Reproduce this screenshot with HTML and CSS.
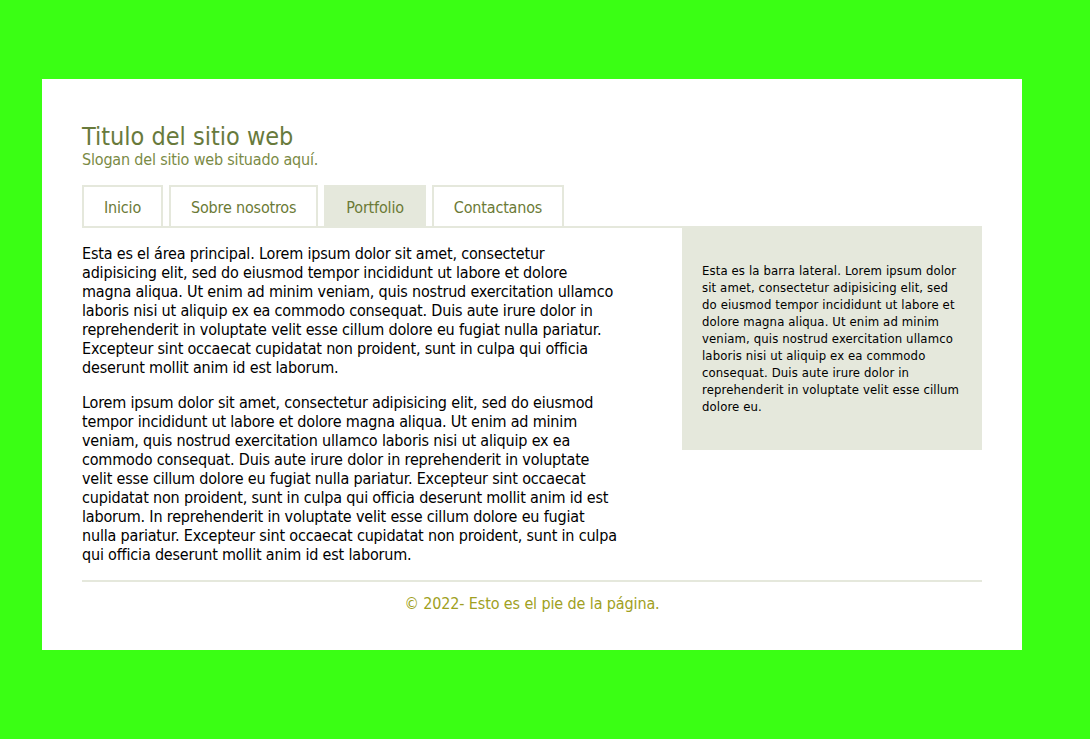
FILE: index.html
```html
<!DOCTYPE html>
<html lang="es">
<head>
<meta charset="utf-8">
<title>Titulo del sitio web</title>
<link rel="stylesheet" href="styles.css">
</head>
<body>
<div class="page">
  <header class="header">
    <h1 class="site-title">Titulo del sitio web</h1>
    <p class="slogan">Slogan del sitio web situado aquí.</p>
  </header>
  <nav class="nav">
    <a class="tab" href="#">Inicio</a>
    <a class="tab" href="#">Sobre nosotros</a>
    <a class="tab active" href="#">Portfolio</a>
    <a class="tab" href="#">Contactanos</a>
  </nav>
  <div class="content">
    <main class="main">
      <p>Esta es el área principal. Lorem ipsum dolor sit amet, consectetur adipisicing elit, sed do eiusmod tempor incididunt ut labore et dolore magna aliqua. Ut enim ad minim veniam, quis nostrud exercitation ullamco laboris nisi ut aliquip ex ea commodo consequat. Duis aute irure dolor in reprehenderit in voluptate velit esse cillum dolore eu fugiat nulla pariatur. Excepteur sint occaecat cupidatat non proident, sunt in culpa qui officia deserunt mollit anim id est laborum.</p>
      <p>Lorem ipsum dolor sit amet, consectetur adipisicing elit, sed do eiusmod tempor incididunt ut labore et dolore magna aliqua. Ut enim ad minim veniam, quis nostrud exercitation ullamco laboris nisi ut aliquip ex ea commodo consequat. Duis aute irure dolor in reprehenderit in voluptate velit esse cillum dolore eu fugiat nulla pariatur. Excepteur sint occaecat cupidatat non proident, sunt in culpa qui officia deserunt mollit anim id est laborum. In reprehenderit in voluptate velit esse cillum dolore eu fugiat nulla pariatur. Excepteur sint occaecat cupidatat non proident, sunt in culpa qui officia deserunt mollit anim id est laborum.</p>
    </main>
    <aside class="sidebar">
      <p>Esta es la barra lateral. Lorem ipsum dolor sit amet, consectetur adipisicing elit, sed do eiusmod tempor incididunt ut labore et dolore magna aliqua. Ut enim ad minim veniam, quis nostrud exercitation ullamco laboris nisi ut aliquip ex ea commodo consequat. Duis aute irure dolor in reprehenderit in voluptate velit esse cillum dolore eu.</p>
    </aside>
  </div>
  <footer class="footer">© 2022- Esto es el pie de la página.</footer>
</div>
</body>
</html>
```

FILE: styles.css
```css
html, body {
  margin: 0;
  padding: 0;
}

body {
  background: #3aff14;
  font-family: "DejaVu Sans Condensed", "DejaVu Sans", sans-serif;
  color: #000;
  padding-top: 79px;
  padding-left: 42px;
}

.page {
  width: 900px;
  background: #fff;
  padding: 40px 40px 37px;
}

.header {
  padding-top: 4px;
  margin-bottom: 16px;
}

.site-title {
  margin: 0;
  font-size: 25px;
  line-height: 27px;
  font-weight: normal;
  color: #687a3c;
}

.slogan {
  margin: 0;
  font-size: 16px;
  line-height: 19px;
  letter-spacing: -0.18px;
  color: #7a8a45;
}

.nav {
  display: flex;
  gap: 6px;
  border-bottom: 2px solid #e5e8dc;
}

.tab {
  display: block;
  padding: 11px 20px 9px;
  line-height: 19px;
  font-size: 16px;
  letter-spacing: -0.18px;
  color: #6b7a36;
  text-decoration: none;
  border: 2px solid #e5e8dc;
  border-bottom: none;
}

.tab.active {
  background: #e5e8dc;
}

.content {
  display: grid;
  grid-template-columns: 537px 300px;
  column-gap: 63px;
  align-items: start;
}

.main p {
  margin: 16px 0;
  font-size: 16px;
  line-height: 19px;
  letter-spacing: -0.18px;
}

.sidebar {
  background: #e5e8dc;
  padding: 20px 20px 21px;
}

.sidebar p {
  margin: 14px 0;
  font-size: 13px;
  line-height: 17px;
  letter-spacing: 0.12px;
}

.footer {
  border-top: 2px solid #e5e8dc;
  padding-top: 12px;
  text-align: center;
  font-size: 16px;
  line-height: 19px;
  letter-spacing: -0.12px;
  color: #a0a022;
}
```
